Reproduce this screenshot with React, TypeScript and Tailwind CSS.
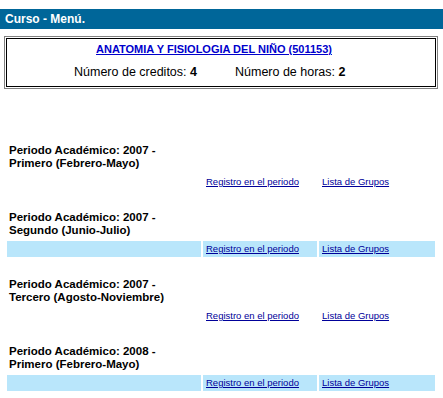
import React from 'react';

interface Periodo {
  year: string;
  name: string;
  highlight: boolean;
}

const periodos: Periodo[] = [
  { year: '2007', name: 'Primero (Febrero-Mayo)', highlight: false },
  { year: '2007', name: 'Segundo (Junio-Julio)', highlight: true },
  { year: '2007', name: 'Tercero (Agosto-Noviembre)', highlight: false },
  { year: '2008', name: 'Primero (Febrero-Mayo)', highlight: true },
];

const PeriodoBlock = ({ periodo }: { periodo: Periodo }) => {
  const cell = periodo.highlight ? 'bg-[#b9e6fb]' : '';
  return (
    <div className="mb-[21px]">
      <div className="pl-[2px] text-[11.5px] font-bold leading-[13px] text-black">
        Periodo Académico: {periodo.year} -<br />
        {periodo.name}
      </div>
      <div className="mt-[4px] flex h-[16px] gap-[2px] text-[9.5px] leading-[16px]">
        <div className={`w-[194px] ${cell}`} />
        <div className={`w-[114px] pl-[3px] ${cell}`}>
          <a href="#" className="text-[#000099] underline">Registro en el periodo</a>
        </div>
        <div className={`flex-1 pl-[3px] ${cell}`}>
          <a href="#" className="text-[#000099] underline">Lista de Grupos</a>
        </div>
      </div>
    </div>
  );
};

export default function App() {
  return (
    <div className="min-h-screen bg-white pt-[9px] font-['Liberation_Sans',Arial,sans-serif]">
      <div className="flex h-[20px] items-center bg-[#006699] pl-[5px] text-[12px] font-bold text-white">
        Curso - Menú.
      </div>

      <div className="ml-[4px] mt-[7px] w-[434px] border border-[#808080] p-[1px]">
        <div className="flex h-[49px] flex-col border border-black pt-[3px]">
          <a href="#" className="self-center pr-[14px] text-[11px] font-bold leading-[14px] text-[#0000cc] underline">
            ANATOMIA Y FISIOLOGIA DEL NIÑO (501153)
          </a>
          <div className="mt-[9px] flex gap-[38px] pl-[67px] text-[12.5px] leading-[14px] text-black">
            <span>Número de creditos: <b>4</b></span>
            <span>Número de horas: <b>2</b></span>
          </div>
        </div>
      </div>

      <div className="ml-[7px] mr-[8px] mt-[55px]">
        {periodos.map((p, i) => (
          <PeriodoBlock key={i} periodo={p} />
        ))}
      </div>
    </div>
  );
}
